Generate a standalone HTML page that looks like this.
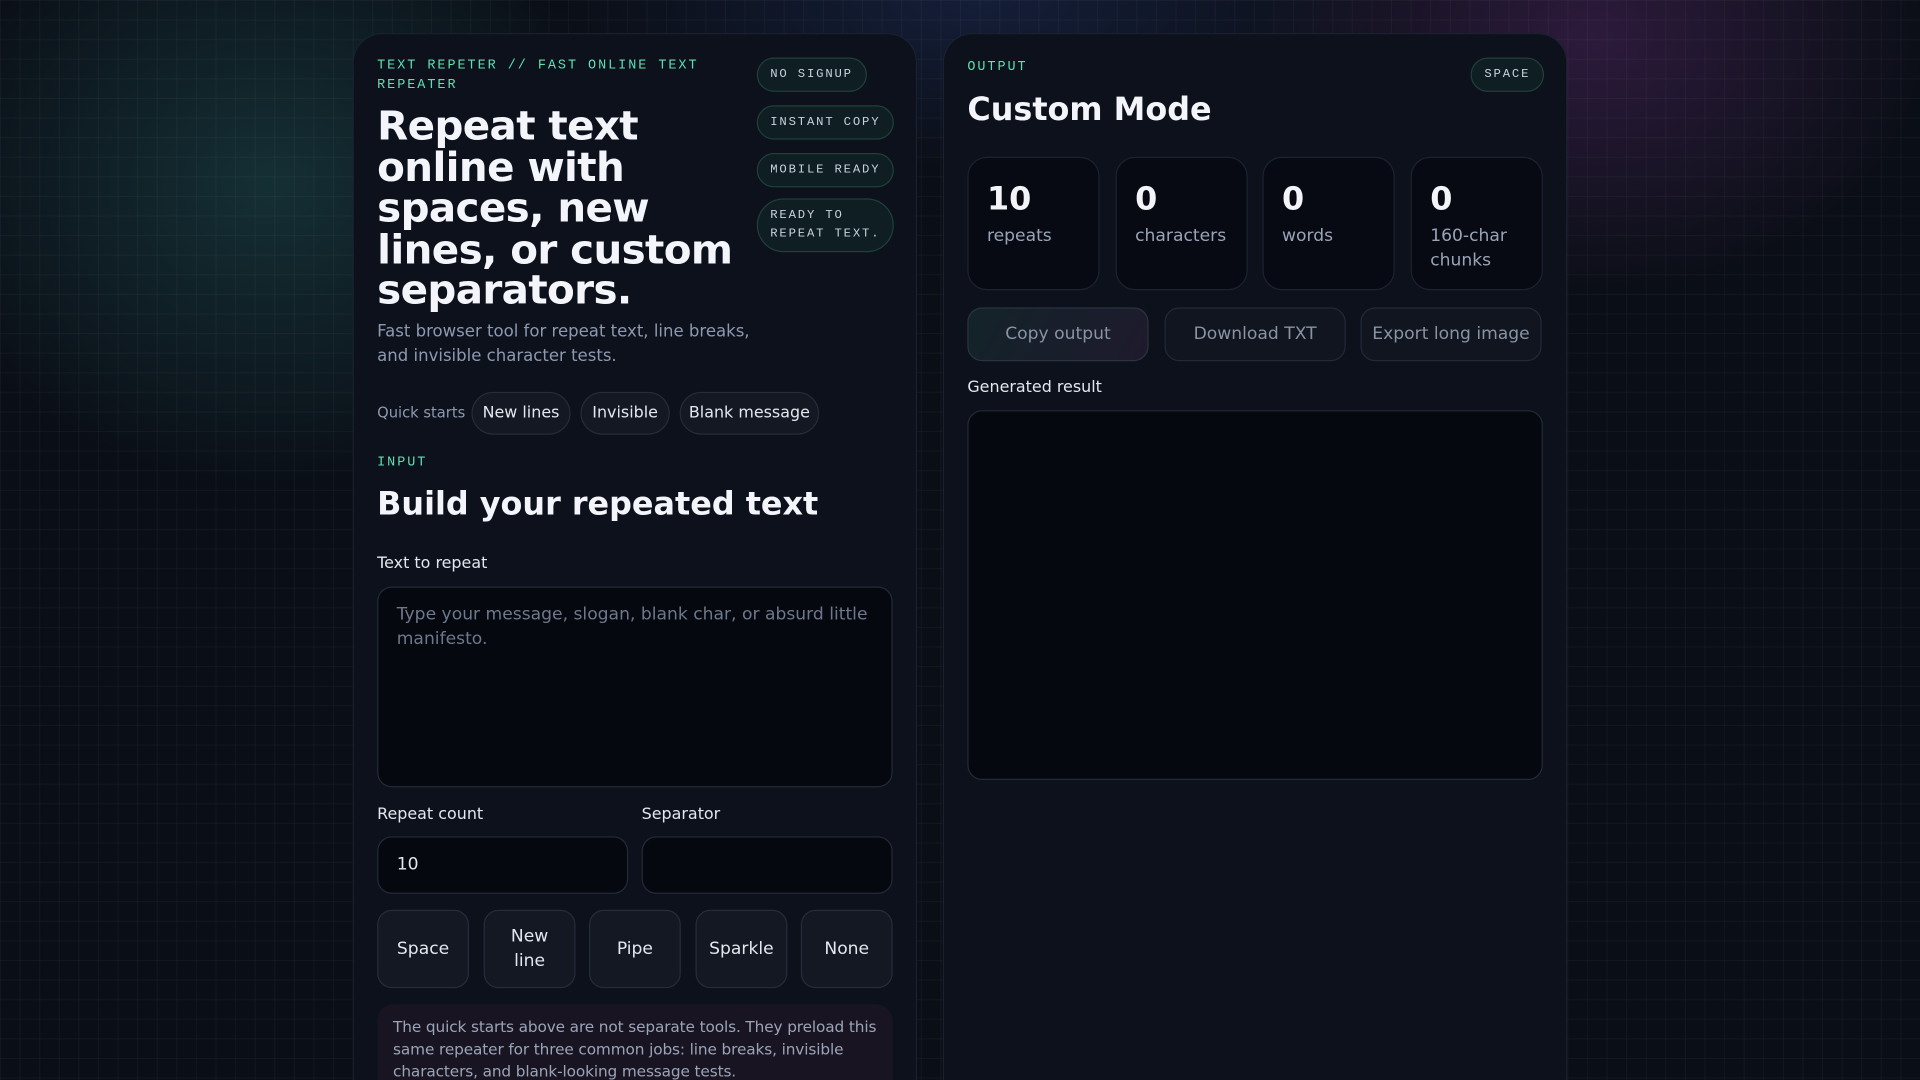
<!DOCTYPE html>
<html><head><meta charset="utf-8"><style>
html,body{margin:0;padding:0;width:1920px;height:1080px;overflow:hidden;background:#0a0e16;}
#s{position:absolute;left:0;top:0;width:1568px;height:882px;transform:scale(1.22449);transform-origin:0 0;overflow:hidden;
font-family:"DejaVu Sans","Liberation Sans",sans-serif;color:#e8ecf4;
background:
radial-gradient(ellipse 420px 360px at 220px 150px,rgba(40,110,110,.35),transparent 70%),
radial-gradient(ellipse 400px 300px at 1300px 30px,rgba(110,50,130,.35),transparent 70%),
radial-gradient(ellipse 500px 200px at 800px 0px,rgba(40,60,120,.35),transparent 70%),
#0a0e16;}
#grid{position:absolute;inset:0;background-image:linear-gradient(rgba(255,255,255,.035) 1px,transparent 1px),linear-gradient(90deg,rgba(255,255,255,.035) 1px,transparent 1px);background-size:16px 16px;}
.panel{position:absolute;top:27px;height:855px;border-radius:24px 24px 0 0;background:#0c111c;border:1px solid #1a2130;border-bottom:none;box-sizing:border-box;overflow:hidden;}
.mono{font-family:"Liberation Mono",monospace;color:#5ee0b0;font-size:11px;letter-spacing:1.6px;line-height:16px;}
.a{position:absolute;}
.pill{position:absolute;left:329px;font-family:"Liberation Mono",monospace;font-size:10px;letter-spacing:1.5px;color:#c8d2de;background:#0f1e22;border:1px solid #1f4038;border-radius:16px;padding:0 10px;height:28px;line-height:28px;box-sizing:border-box;white-space:nowrap;}
.qb{position:absolute;top:292px;height:35px;line-height:33px;border:1px solid #252c3a;background:#131823;border-radius:18px;font-size:13px;color:#e3e7ee;box-sizing:border-box;padding:0;text-align:center;white-space:nowrap;}
.lbl{position:absolute;font-size:13px;color:#e3e7ee;}
.box{position:absolute;background:#05080f;border:1px solid #232a38;border-radius:12px;box-sizing:border-box;}
.sep{position:absolute;width:75px;height:64px;background:#131823;border:1px solid #252c3a;border-radius:12px;box-sizing:border-box;display:flex;align-items:center;justify-content:center;text-align:center;font-size:14px;line-height:20px;color:#e3e7ee;}
.card{position:absolute;width:108px;height:109px;background:#070a12;border:1px solid #1c2230;border-radius:16px;box-sizing:border-box;padding:18px 0 0 15px;}
.card b{display:block;font-size:26px;line-height:32px;color:#f2f4f8;}
.card span{display:block;font-size:14px;line-height:20px;color:#9aa4b8;margin-top:4px;}
.btn{position:absolute;height:44px;width:148px;border:1px solid #222938;background:#10151f;border-radius:12px;box-sizing:border-box;text-align:center;line-height:42px;font-size:14px;color:#8a93a4;}
</style></head><body><div id="s"><div id="grid"></div>
<div class="panel" style="left:288px;width:461px;">
 <div class="a mono" style="left:19px;top:18px;width:290px;">TEXT REPETER // FAST ONLINE TEXT REPEATER</div>
 <div class="a" style="left:19px;top:58px;width:300px;font-size:33px;font-weight:bold;line-height:33.6px;color:#f3f5fa;letter-spacing:-.5px;">Repeat text online with spaces, new lines, or custom separators.</div>
 <div class="a" style="left:19px;top:233px;width:315px;font-size:13.5px;line-height:20px;color:#8e99b0;">Fast browser tool for repeat text, line breaks,<br>and invisible character tests.</div>
 <div class="pill" style="top:19px;">NO SIGNUP</div>
 <div class="pill" style="top:58px;">INSTANT COPY</div>
 <div class="pill" style="top:97px;">MOBILE READY</div>
 <div class="pill" style="top:134px;height:44px;line-height:15px;padding-top:6px;border-radius:22px;white-space:normal;width:112px;">READY TO REPEAT TEXT.</div>
 <div class="a" style="left:19px;top:302px;font-size:12px;color:#8e99b0;">Quick starts</div>
 <div class="qb" style="left:96px;width:81px;">New lines</div>
 <div class="qb" style="left:185px;width:73px;">Invisible</div>
 <div class="qb" style="left:266px;width:114px;">Blank message</div>
 <div class="a mono" style="left:19px;top:342px;">INPUT</div>
 <div class="a" style="left:19px;top:369px;font-size:26px;font-weight:bold;color:#f3f5fa;">Build your repeated text</div>
 <div class="lbl" style="left:19px;top:425px;">Text to repeat</div>
 <div class="box" style="left:19px;top:451px;width:421px;height:164px;padding:12px 15px;font-size:14px;line-height:20px;color:#6e788c;">Type your message, slogan, blank char, or absurd little manifesto.</div>
 <div class="lbl" style="left:19px;top:630px;">Repeat count</div>
 <div class="lbl" style="left:235px;top:630px;">Separator</div>
 <div class="box" style="left:19px;top:655px;width:205px;height:47px;padding:0 15px;line-height:45px;font-size:14px;color:#e3e7ee;">10</div>
 <div class="box" style="left:235px;top:655px;width:205px;height:47px;"></div>
 <div class="sep" style="left:19px;top:715px;">Space</div>
 <div class="sep" style="left:106px;top:715px;">New<br>line</div>
 <div class="sep" style="left:192px;top:715px;">Pipe</div>
 <div class="sep" style="left:279px;top:715px;">Sparkle</div>
 <div class="sep" style="left:365px;top:715px;">None</div>
 <div class="a" style="left:19px;top:792px;width:421px;height:100px;background:#191422;border-radius:14px;box-sizing:border-box;padding:10px 13px;font-size:12.5px;line-height:18px;color:#9aa4b8;letter-spacing:-.1px;">The quick starts above are not separate tools. They preload this same repeater for three common jobs: line breaks, invisible characters, and blank-looking message tests.</div>
</div>
<div class="panel" style="left:770px;width:510px;">
 <div class="a mono" style="left:19px;top:19px;">OUTPUT</div>
 <div class="a" style="left:19px;top:47px;font-size:26px;font-weight:bold;color:#f3f5fa;">Custom Mode</div>
 <div class="pill" style="left:430px;top:19px;width:60px;padding:0;text-align:center;">SPACE</div>
 <div class="card" style="left:19px;top:100px;"><b>10</b><span>repeats</span></div>
 <div class="card" style="left:140px;top:100px;"><b>0</b><span>characters</span></div>
 <div class="card" style="left:260px;top:100px;"><b>0</b><span>words</span></div>
 <div class="card" style="left:381px;top:100px;"><b>0</b><span>160-char chunks</span></div>
 <div class="btn" style="left:19px;top:223px;background:linear-gradient(120deg,#13232a,#1e1a2c);border-color:#2a3342;">Copy output</div>
 <div class="btn" style="left:180px;top:223px;">Download TXT</div>
 <div class="btn" style="left:340px;top:223px;">Export long image</div>
 <div class="lbl" style="left:19px;top:281px;">Generated result</div>
 <div class="box" style="left:19px;top:307px;width:470px;height:302px;"></div>
</div>
</div></body></html>
